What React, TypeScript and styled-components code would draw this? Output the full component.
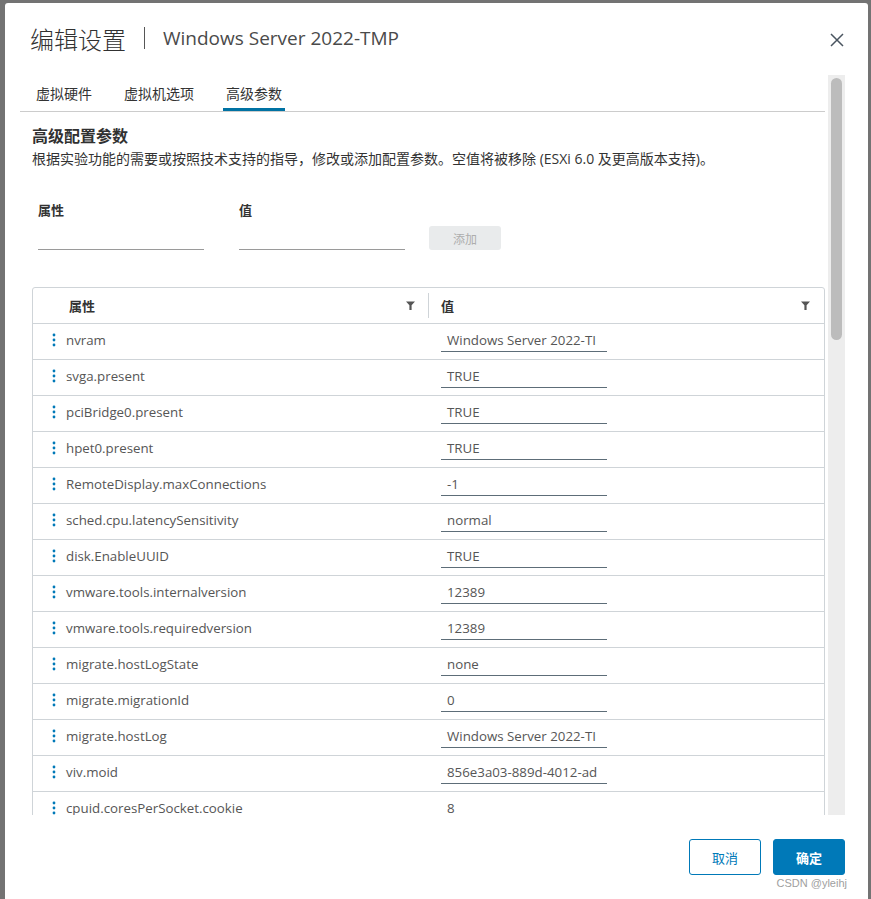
import React from "react";
import styled, { createGlobalStyle } from "styled-components";

const GlobalStyle = createGlobalStyle`
  html, body {
    margin: 0;
    padding: 0;
    height: 100%;
    overflow: hidden;
  }
  body {
    font-family: "Open Sans", "Noto Sans CJK SC", sans-serif;
    color: #333;
  }
  #root {
    height: 100%;
  }
`;

const Overlay = styled.div`
  height: 100%;
  box-sizing: border-box;
  background: #737373;
  padding: 3px 3px 0 5px;
  display: flex;
`;

const Modal = styled.div`
  flex: 1;
  background: #fff;
  border-radius: 3px 3px 0 0;
  display: flex;
  flex-direction: column;
  overflow: hidden;
`;

const Header = styled.header`
  height: 72px;
  display: flex;
  align-items: center;
  padding: 0 23px 0 25px;
  box-sizing: border-box;
`;

const Title = styled.h1`
  margin: 0;
  font-family: "Noto Sans CJK SC", sans-serif;
  font-size: 24px;
  font-weight: 300;
  color: #313131;
  padding-right: 18px;
  margin-top: -2px;
`;

const TitleDivider = styled.span`
  width: 1px;
  height: 22px;
  background: #565656;
  margin-right: 18px;
  margin-top: -2px;
`;

const SubTitle = styled.span`
  font-size: 19px;
  color: #4a4a4a;
  flex: 1;
  margin-top: -2px;
`;

const CloseButton = styled.button`
  border: none;
  background: none;
  padding: 0;
  width: 16px;
  height: 16px;
  display: flex;
  align-items: center;
  justify-content: center;
  margin-top: 2px;
  cursor: pointer;
`;

const Body = styled.div`
  height: 740px;
  display: flex;
  gap: 3px;
  padding: 0 23px 0 15px;
`;

const Content = styled.div`
  flex: 1;
  overflow: hidden;
`;

const Track = styled.div`
  width: 17px;
  background: #ededed;
  padding: 3px 3px;
  box-sizing: border-box;
`;

const Thumb = styled.div`
  height: 262px;
  background: #bcbcbc;
  border-radius: 6px;
`;

const TabBar = styled.nav`
  height: 36px;
  display: flex;
  gap: 26px;
  padding-left: 13px;
  border-bottom: 1px solid #ccc;
`;

const Tab = styled.div<{ $active?: boolean }>`
  padding: 0 3px;
  display: flex;
  align-items: center;
  font-size: 14px;
  font-family: "Noto Sans CJK SC", sans-serif;
  color: #333;
  box-shadow: ${(p) => (p.$active ? "inset 0 -3px 0 #0072a3" : "none")};
`;

const Section = styled.section`
  padding: 0 0 0 12px;
`;

const Heading = styled.h2`
  margin: 11px 0 2px;
  font-size: 16px;
  line-height: 24px;
  font-weight: 700;
  font-family: "Noto Sans CJK SC", sans-serif;
  color: #313131;
`;

const Description = styled.p`
  margin: 0;
  font-size: 14px;
  line-height: 20px;
  color: #333;
  white-space: nowrap;
`;

const AddForm = styled.div`
  display: flex;
  align-items: flex-end;
  gap: 35px;
  margin: 31px 0 0 6px;
`;

const Field = styled.label`
  display: flex;
  flex-direction: column;
  gap: 6px;
  width: 166px;
`;

const FieldLabel = styled.span`
  font-size: 13px;
  line-height: 20px;
  font-weight: 700;
  font-family: "Noto Sans CJK SC", sans-serif;
  color: #333;
`;

const FieldInput = styled.div`
  height: 24px;
  border-bottom: 1px solid #9a9a9a;
  box-sizing: border-box;
`;

const AddButton = styled.button`
  width: 72px;
  height: 24px;
  margin-left: -11px;
  border: none;
  border-radius: 3px;
  background: #e9ebec;
  color: #adadad;
  font-size: 12px;
  font-family: "Noto Sans CJK SC", sans-serif;
`;

const Table = styled.div`
  margin-top: 37px;
  border: 1px solid #cfd4d8;
  border-radius: 3px 3px 0 0;
  width: 793px;
  box-sizing: border-box;
`;

const Row = styled.div<{ $head?: boolean }>`
  height: 36px;
  display: grid;
  grid-template-columns: 396px 1fr;
  border-bottom: 1px solid #cfd4d8;
  box-sizing: border-box;
  font-size: 13.3px;
  color: ${(p) => (p.$head ? "#333" : "#565656")};
`;

const HeadCell = styled.div<{ $divider?: boolean }>`
  display: flex;
  align-items: center;
  padding: 0 14px 0 ${(p) => (p.$divider ? "12px" : "36px")};
  font-size: 13px;
  font-weight: 700;
  font-family: "Noto Sans CJK SC", sans-serif;
  position: relative;
  margin-top: -1px;
  & > span {
    flex: 1;
  }
  &::after {
    content: "";
    display: ${(p) => (p.$divider ? "none" : "block")};
    position: absolute;
    right: 0;
    top: 6px;
    bottom: 5px;
    width: 1px;
    background: #cfd4d8;
  }
`;

const NameCell = styled.div`
  display: flex;
  align-items: center;
  gap: 10px;
  padding-left: 19px;
  margin-top: -4px;
`;

const ValueCell = styled.div`
  padding-left: 12px;
  display: flex;
  align-items: flex-start;
`;

const ValueInput = styled.div`
  width: 166px;
  height: 28px;
  box-sizing: border-box;
  padding: 7px 6px 0;
  border-bottom: 1px solid #5d6d78;
  white-space: nowrap;
  line-height: 18px;
  color: #565656;
`;

const Footer = styled.footer`
  flex: 1;
  display: flex;
  flex-direction: column;
  align-items: flex-end;
  padding: 24px 23px 0 0;
`;

const Buttons = styled.div`
  display: flex;
  gap: 12px;
`;

const Button = styled.button<{ $primary?: boolean }>`
  width: 72px;
  height: 36px;
  border-radius: 3px;
  border: 1px solid #0079b8;
  background: ${(p) => (p.$primary ? "#0079b8" : "#fff")};
  color: ${(p) => (p.$primary ? "#fff" : "#0079b8")};
  font-weight: ${(p) => (p.$primary ? 700 : 400)};
  font-size: 13px;
  font-family: "Noto Sans CJK SC", sans-serif;
`;

const Watermark = styled.span`
  margin-top: 2px;
  margin-right: -2px;
  font-size: 11px;
  color: #a0a0a0;
  font-family: "Liberation Sans", sans-serif;
`;

const Dots = () => (
  <svg width="4" height="14" viewBox="0 0 4 14">
    <circle cx="2" cy="2" r="1.4" fill="#0079b8" />
    <circle cx="2" cy="7" r="1.4" fill="#0079b8" />
    <circle cx="2" cy="12" r="1.4" fill="#0079b8" />
  </svg>
);

const Filter = () => (
  <svg width="9" height="9" viewBox="0 0 9 9">
    <path d="M0 0.5 H9 L5.6 4.2 V9 H3.4 V4.2 Z" fill="#555" />
  </svg>
);

// values as they show in the fixed-width inputs
const rows: [string, string][] = [
  ["nvram", "Windows Server 2022-TI"],
  ["svga.present", "TRUE"],
  ["pciBridge0.present", "TRUE"],
  ["hpet0.present", "TRUE"],
  ["RemoteDisplay.maxConnections", "-1"],
  ["sched.cpu.latencySensitivity", "normal"],
  ["disk.EnableUUID", "TRUE"],
  ["vmware.tools.internalversion", "12389"],
  ["vmware.tools.requiredversion", "12389"],
  ["migrate.hostLogState", "none"],
  ["migrate.migrationId", "0"],
  ["migrate.hostLog", "Windows Server 2022-TI"],
  ["viv.moid", "856e3a03-889d-4012-ad"],
  ["cpuid.coresPerSocket.cookie", "8"],
];

export default function App() {
  return (
    <>
      <GlobalStyle />
      <Overlay>
        <Modal>
          <Header>
            <Title>编辑设置</Title>
            <TitleDivider />
            <SubTitle>Windows Server 2022-TMP</SubTitle>
            <CloseButton aria-label="close">
              <svg width="14" height="14" viewBox="0 0 14 14">
                <path d="M1 1 L13 13 M13 1 L1 13" stroke="#4a5560" strokeWidth="1.5" />
              </svg>
            </CloseButton>
          </Header>

          <Body>
            <Content>
              <TabBar>
                <Tab>虚拟硬件</Tab>
                <Tab>虚拟机选项</Tab>
                <Tab $active>高级参数</Tab>
              </TabBar>

              <Section>
                <Heading>高级配置参数</Heading>
                <Description>
                  根据实验功能的需要或按照技术支持的指导，修改或添加配置参数。空值将被移除 (ESXi 6.0 及更高版本支持)。
                </Description>

                <AddForm>
                  <Field>
                    <FieldLabel>属性</FieldLabel>
                    <FieldInput />
                  </Field>
                  <Field>
                    <FieldLabel>值</FieldLabel>
                    <FieldInput />
                  </Field>
                  <AddButton disabled>添加</AddButton>
                </AddForm>

                <Table>
                  <Row $head>
                    <HeadCell>
                      <span>属性</span>
                      <Filter />
                    </HeadCell>
                    <HeadCell $divider>
                      <span>值</span>
                      <Filter />
                    </HeadCell>
                  </Row>
                  {rows.map(([name, value]) => (
                    <Row key={name}>
                      <NameCell>
                        <Dots />
                        {name}
                      </NameCell>
                      <ValueCell>
                        <ValueInput>{value}</ValueInput>
                      </ValueCell>
                    </Row>
                  ))}
                </Table>
              </Section>
            </Content>
            <Track>
              <Thumb />
            </Track>
          </Body>

          <Footer>
            <Buttons>
              <Button>取消</Button>
              <Button $primary>确定</Button>
            </Buttons>
            <Watermark>CSDN @yleihj</Watermark>
          </Footer>
        </Modal>
      </Overlay>
    </>
  );
}
